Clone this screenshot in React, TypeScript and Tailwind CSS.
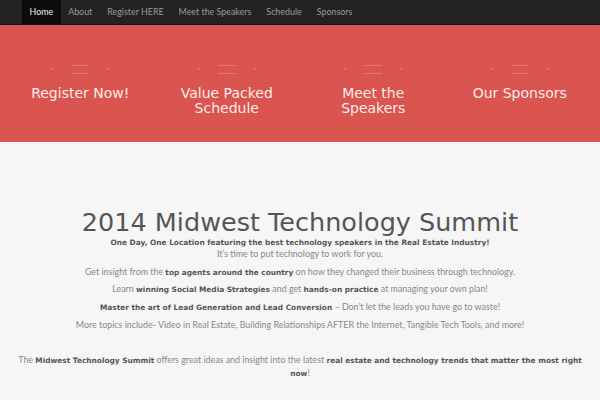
import React from "react";

function B({ children }: { children: React.ReactNode }) {
  return <b className="font-['DejaVu_Sans',sans-serif] text-[7.4px] font-bold text-[#555555]">{children}</b>;
}

function Ghost() {
  return (
    <div className="flex h-[14px] items-center justify-center gap-[18px] opacity-50">
      <span className="h-[2px] w-[2px] rounded-full bg-white/40" />
      <div className="flex flex-col gap-[7px]">
        <span className="h-px w-[18px] bg-white/40" />
        <span className="h-px w-[18px] bg-white/40" />
      </div>
      <span className="h-[2px] w-[2px] rounded-full bg-white/40" />
    </div>
  );
}

export default function App() {
  const nav = ["Home", "About", "Register HERE", "Meet the Speakers", "Schedule", "Sponsors"];
  const tiles = [["Register Now!"], ["Value Packed", "Schedule"], ["Meet the", "Speakers"], ["Our Sponsors"]];
  return (
    <div className="h-[400px] w-[600px] overflow-hidden bg-[#f6f6f6]">
      <div className="flex h-[25px] border-b border-[#1a1a1a] bg-[#232323] pl-[22px] font-['Lato',sans-serif]">
        {nav.map((n, i) => (
          <div
            key={n}
            className={`flex items-center px-[7.5px] text-[8.9px] ${i === 0 ? "bg-[#0c0c0c] text-[#eeeeee]" : "text-[#9a9a9a]"}`}
          >
            {n}
          </div>
        ))}
      </div>
      <div className="h-[117px] bg-[#da5450] px-[7px] pt-[37px] font-['DejaVu_Sans',sans-serif]">
        <div className="grid grid-cols-4">
          {tiles.map((t, i) => (
            <div key={i} className="flex flex-col items-center">
              <Ghost />
              <div className="mt-[10px] text-center text-[14px] leading-[15px] text-[#fbecea]">
                {t.map((l) => (
                  <div key={l}>{l}</div>
                ))}
              </div>
            </div>
          ))}
        </div>
      </div>
      <div className="flex flex-col items-center pt-[65px] text-center">
        <h1 className="font-['DejaVu_Sans',sans-serif] text-[25.5px] leading-[30px] text-[#555555]">
          2014 Midwest Technology Summit
        </h1>
        <div className="font-['DejaVu_Sans',sans-serif] text-[7.4px] font-bold leading-[11px] text-[#555555]">
          One Day, One Location featuring the best technology speakers in the Real Estate Industry!
        </div>
        <div className="font-['Lato',sans-serif] text-[8.9px] leading-[12px] text-[#888888]">
          It’s time to put technology to work for you.
        </div>
        <div className="mt-[5.5px] flex flex-col gap-[4.7px] font-['Lato',sans-serif] text-[8.9px] leading-[12px] text-[#888888]">
          <p>
            Get insight from the <B>top agents around the country</B> on how they changed their business through technology.
          </p>
          <p>
            Learn <B>winning Social Media Strategies</B> and get <B>hands-on practice</B> at managing your own plan!
          </p>
          <p>
            <B>Master the art of Lead Generation and Lead Conversion</B> – Don’t let the leads you have go to waste!
          </p>
          <p>More topics include- Video in Real Estate, Building Relationships AFTER the Internet, Tangible Tech Tools, and more!</p>
        </div>
        <p className="mt-[23px] px-[18px] font-['Lato',sans-serif] text-[8.9px] leading-[12px] text-[#888888]">
          The <B>Midwest Technology Summit</B> offers great ideas and insight into the latest{" "}
          <B>real estate and technology trends that matter the most right now</B>!
        </p>
      </div>
      <div className="mt-[22px] px-[15px] font-['DejaVu_Sans',sans-serif] text-[7.4px] font-bold leading-[10px] text-[#333333]">
        Event Details
      </div>
    </div>
  );
}
